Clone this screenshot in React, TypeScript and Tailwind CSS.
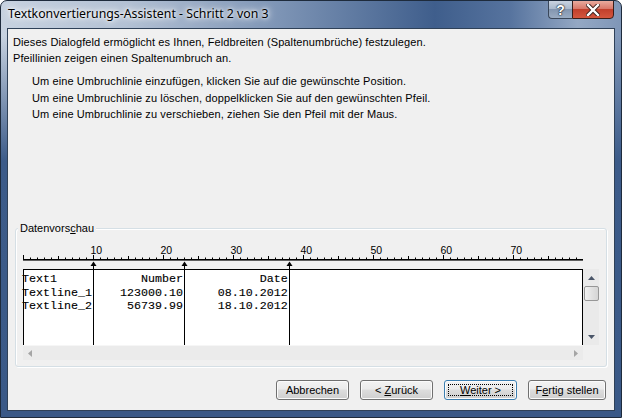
import React from "react";

const sans = "font-['Tahoma','Liberation_Sans',sans-serif]";

function Ruler() {
  const ticks: React.ReactNode[] = [];
  for (let k = 0; k <= 79; k++) {
    const x = 7 * k + 0.5;
    const h = k % 10 === 0 ? 4 : k % 5 === 0 ? 3 : 1.5;
    ticks.push(<line key={k} x1={x} x2={x} y1={15 - h} y2={15} stroke="#000" strokeWidth={1} />);
  }
  const nums: React.ReactNode[] = [];
  for (let n = 10; n <= 70; n += 10) {
    nums.push(
      <text key={n} x={7 * n - 2.5} y={10} fontSize={10.5} fontFamily="Tahoma, 'Liberation Sans', sans-serif" fill="#000">
        {n}
      </text>
    );
  }
  const arrows = [70, 161, 266];
  return (
    <svg width={562} height={25} className="block">
      {nums}
      {ticks}
      <rect x={0} y={15} width={560} height={1.6} fill="#000" />
      {arrows.map((a) => (
        <g key={a}>
          <polygon points={`${a - 2.5},22 ${a + 0.5},17.5 ${a + 3.5},22`} fill="#000" />
          <line x1={a + 0.5} x2={a + 0.5} y1={22} y2={25} stroke="#000" />
        </g>
      ))}
    </svg>
  );
}

function Btn({ children, w, focused }: { children: React.ReactNode; w: string; focused?: boolean }) {
  return (
    <div
      className={
        "relative h-[20px] rounded-[3px] border flex items-center justify-center text-[11px] text-black shadow-[inset_0_0_0_1px_#fbfbfb] bg-[linear-gradient(to_bottom,#f3f3f3_0%,#ebebeb_45%,#dddddd_50%,#cfcfcf_100%)] " +
        w +
        (focused ? " border-[#3c7fb1]" : " border-[#707070]")
      }
    >
      {focused && <div className="absolute inset-[3px] border border-dotted border-black" />}
      <span className="relative">{children}</span>
    </div>
  );
}

export default function App() {
  const rows = [
    "Text1            Number           Date",
    "Textline_1    123000.10     08.10.2012",
    "Textline_2     56739.99     18.10.2012",
  ];
  return (
    <div
      className={
        "w-[622px] h-[418px] relative overflow-hidden flex flex-col rounded-t-[7px] border border-[#1e2b3c] " +
        "bg-[linear-gradient(to_bottom,rgba(60,91,137,0)_0px,rgba(60,91,137,0)_35px,#3c5b89_160px,#3a5987_100%),linear-gradient(to_right,#c7d2e0_0%,#b3c1d4_20%,#7d94b5_45%,#3f5e8c_70%,#56739e_82%,#94a8c4_93%,#7f96b7_100%)] " +
        sans
      }
    >
      {/* title bar */}
      <div className="h-[27px] pl-[7px] flex items-center">
        <span className="font-['Segoe_UI','Noto_Sans',sans-serif] text-[12.3px] text-black [text-shadow:0_0_6px_#fff,0_0_3px_#fff,0_0_10px_#fff]">
          Textkonvertierungs-Assistent - Schritt 2 von 3
        </span>
      </div>
      {/* caption buttons */}
      <div className="absolute top-[-1px] right-[7px] flex h-[19px]">
        <div className="w-[24px] h-full rounded-bl-[4px] border border-[#3a475a] border-r-0 bg-[linear-gradient(to_bottom,#c9d3e0_0%,#aab9cc_45%,#8396b0_50%,#9aabc2_100%)] flex items-center justify-center">
          <span className="font-['Liberation_Sans',sans-serif] font-bold text-[14px] leading-none text-white [text-shadow:0_0_1px_#1c2530,0_0_1px_#1c2530,0_0_2px_#1c2530]">?</span>
        </div>
        <div className="w-[42px] h-full rounded-br-[4px] border border-[#3a1e1a] bg-[linear-gradient(to_bottom,#e9ab9e_0%,#d9786a_45%,#c2402c_50%,#d4563e_100%)] flex items-center justify-center">
          <svg width="14" height="12" viewBox="0 0 14 12">
            <path d="M2 1 L12 11 M12 1 L2 11" stroke="#3a1f1b" strokeWidth="4.2" strokeLinecap="square" />
            <path d="M2 1 L12 11 M12 1 L2 11" stroke="#fff" strokeWidth="2.4" strokeLinecap="square" />
          </svg>
        </div>
      </div>
      {/* client */}
      <div className="flex-1 mx-[6px] mb-[6px] border border-[#2f4158] bg-[#f0f0f0] flex flex-col text-[11px] text-black">
        <div className="pl-[5px] pt-[5px] leading-[16px] tracking-[0.1px]">
          <div>Dieses Dialogfeld ermöglicht es Ihnen, Feldbreiten (Spaltenumbrüche) festzulegen.</div>
          <div>Pfeillinien zeigen einen Spaltenumbruch an.</div>
        </div>
        <div className="pl-[24px] pt-[7px] leading-[16.5px] tracking-[0.1px]">
          <div>Um eine Umbruchlinie einzufügen, klicken Sie auf die gewünschte Position.</div>
          <div>Um eine Umbruchlinie zu löschen, doppelklicken Sie auf den gewünschten Pfeil.</div>
          <div>Um eine Umbruchlinie zu verschieben, ziehen Sie den Pfeil mit der Maus.</div>
        </div>
        {/* group box */}
        <div className="mt-auto mx-[7px] mb-[13px] h-[139px] relative border border-[#d5dfe5] rounded-[3px] shadow-[inset_1px_1px_0_#fff,1px_1px_0_#fff] pl-[7px] pt-[15px]">
          <div className="absolute left-[2px] top-[-8px] px-[2px] bg-[#f0f0f0] leading-[14px]">
            Datenvors<span className="underline">c</span>hau
          </div>
          <Ruler />
          <div className="flex">
            <div className="w-[560px] flex flex-col">
              <div className="relative h-[76px] bg-white border-t border-l border-r border-black">
                <div className="absolute left-[69px] top-0 bottom-0 w-px bg-black" />
                <div className="absolute left-[160px] top-0 bottom-0 w-px bg-black" />
                <div className="absolute left-[265px] top-0 bottom-0 w-px bg-black" />
                <div className="relative -ml-[2px] pt-[3px] font-['Courier_New','Liberation_Mono',monospace] text-[11.67px] leading-[13.5px] whitespace-pre [-webkit-text-stroke:0.12px_#000]">
                  {rows.map((r) => (
                    <div key={r}>{r}</div>
                  ))}
                </div>
              </div>
              <div className="h-[15px] bg-[#ebebeb] border-t border-[#f6f6f6] flex items-center justify-between px-[5px]">
                <svg width="4" height="7" viewBox="0 0 4 7">
                  <polygon points="4,0 0,3.5 4,7" fill="#a5a5a5" />
                </svg>
                <svg width="4" height="7" viewBox="0 0 4 7">
                  <polygon points="0,0 4,3.5 0,7" fill="#a5a5a5" />
                </svg>
              </div>
            </div>
            <div className="w-[16px] h-[76px] bg-[#eaeaea] flex flex-col items-center">
              <div className="h-[17px] flex items-center justify-center">
                <svg width="7" height="4" viewBox="0 0 7 4">
                  <polygon points="0,4 3.5,0 7,4" fill="#4a5568" />
                </svg>
              </div>
              <div className="w-[15px] h-[15px] rounded-[2px] border border-[#979797] bg-[linear-gradient(to_right,#f2f2f2,#e2e2e2_50%,#d5d5d5)]" />
              <div className="flex-1" />
              <div className="h-[17px] flex items-center justify-center">
                <svg width="7" height="4" viewBox="0 0 7 4">
                  <polygon points="0,0 7,0 3.5,4" fill="#4a5568" />
                </svg>
              </div>
            </div>
          </div>
        </div>
        {/* buttons */}
        <div className="flex justify-end gap-[11px] pr-[8px] mb-[10px]">
          <Btn w="w-[73px]">Abbrechen</Btn>
          <Btn w="w-[73px]">
            &lt; <span className="underline">Z</span>urück
          </Btn>
          <Btn w="w-[73px]" focused>
            <span className="underline">W</span>eiter &gt;
          </Btn>
          <Btn w="w-[78px]">
            F<span className="underline">e</span>rtig stellen
          </Btn>
        </div>
      </div>
    </div>
  );
}
